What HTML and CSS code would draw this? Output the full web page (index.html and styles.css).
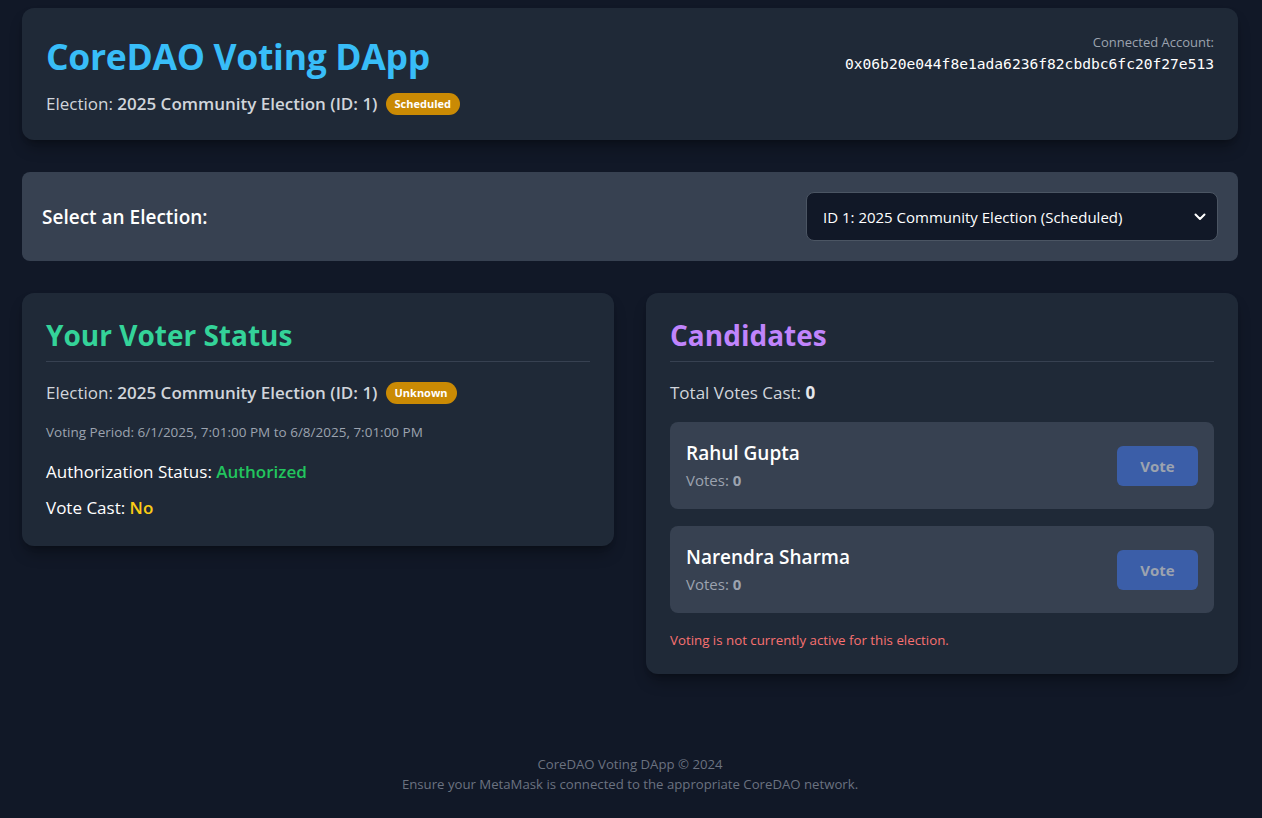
FILE: index.html
```html
<!DOCTYPE html>
<html lang="en">
<head>
<meta charset="utf-8">
<title>CoreDAO Voting DApp</title>
<link rel="stylesheet" href="styles.css">
</head>
<body>
<div class="page">
  <header class="header card">
    <div class="header-left">
      <h1 class="title">CoreDAO Voting DApp</h1>
      <p class="election-line">Election: <strong>2025 Community Election (ID: 1)</strong> <span class="badge">Scheduled</span></p>
    </div>
    <div class="account">
      <div class="account-label">Connected Account:</div>
      <div class="account-addr">0x06b20e044f8e1ada6236f82cbdbc6fc20f27e513</div>
    </div>
  </header>

  <section class="selector">
    <label class="selector-label" for="el">Select an Election:</label>
    <div class="select-wrap">
      <select id="el" class="select">
        <option>ID 1: 2025 Community Election (Scheduled)</option>
      </select>
      <svg class="chev" width="12" height="8" viewBox="0 0 12 8"><path d="M1.5 1.5 L6 6 L10.5 1.5" fill="none" stroke="#ffffff" stroke-width="2" stroke-linecap="round" stroke-linejoin="round"/></svg>
    </div>
  </section>

  <div class="columns">
    <section class="card panel">
      <h2 class="panel-title green">Your Voter Status</h2>
      <p class="election-line small-gap">Election: <strong>2025 Community Election (ID: 1)</strong> <span class="badge">Unknown</span></p>
      <p class="period">Voting Period: 6/1/2025, 7:01:00 PM to 6/8/2025, 7:01:00 PM</p>
      <p class="status">Authorization Status: <strong class="ok">Authorized</strong></p>
      <p class="status">Vote Cast: <strong class="warn">No</strong></p>
    </section>

    <section class="card panel">
      <h2 class="panel-title purple">Candidates</h2>
      <p class="total">Total Votes Cast: <strong>0</strong></p>
      <div class="cand-list">
        <div class="cand">
          <div>
            <div class="cand-name">Rahul Gupta</div>
            <div class="cand-votes">Votes: <strong>0</strong></div>
          </div>
          <button class="vote-btn" disabled>Vote</button>
        </div>
        <div class="cand">
          <div>
            <div class="cand-name">Narendra Sharma</div>
            <div class="cand-votes">Votes: <strong>0</strong></div>
          </div>
          <button class="vote-btn" disabled>Vote</button>
        </div>
      </div>
      <p class="notice">Voting is not currently active for this election.</p>
    </section>
  </div>

  <footer class="footer">
    <p>CoreDAO Voting DApp © 2024</p>
    <p>Ensure your MetaMask is connected to the appropriate CoreDAO network.</p>
  </footer>
</div>
</body>
</html>
```

FILE: styles.css
```css
* { box-sizing: border-box; }
html, body { margin: 0; padding: 0; }
body {
  background: #111827;
  color: #e5e7eb;
  font-family: "Open Sans", "Noto Sans", sans-serif;
  min-height: 818px;
}
p { margin: 0; }
h1, h2 { margin: 0; }
.page {
  padding: 8px 24px 0 22px;
}
.card {
  background: #1f2937;
  border-radius: 12px;
  box-shadow: 0 10px 15px -3px rgba(0,0,0,0.3), 0 4px 6px -4px rgba(0,0,0,0.3);
}
.header {
  display: flex;
  justify-content: space-between;
  align-items: flex-start;
  padding: 24px;
  height: 132px;
}
.title {
  font-size: 35.5px;
  line-height: 48px;
  font-weight: 700;
  color: #38bdf8;
  letter-spacing: -0.3px;
}
.election-line {
  font-size: 17px;
  line-height: 28px;
  color: #d1d5db;
  margin-top: 10px;
  display: flex;
  align-items: center;
  white-space: pre;
}
.election-line strong { font-weight: 600; color: #d1d5db; }
.badge {
  display: inline-block;
  background: #ca8a04;
  color: #fff;
  font-size: 11px;
  font-weight: 700;
  line-height: 22px;
  padding: 0 9px;
  border-radius: 999px;
  margin-left: 8px;
}
.account {
  text-align: right;
  padding-top: 0;
}
.account-label {
  font-size: 13px;
  line-height: 20px;
  color: #9ca3af;
}
.account-addr {
  font-family: "DejaVu Sans Mono", "Liberation Mono", monospace;
  font-size: 14.6px;
  line-height: 22px;
  color: #ffffff;
  font-weight: 400;
  margin-top: 1px;
}
.selector {
  margin-top: 32px;
  background: #374151;
  border-radius: 8px;
  padding: 20px;
  display: flex;
  align-items: center;
  justify-content: space-between;
  height: 89px;
}
.selector-label {
  font-size: 19px;
  font-weight: 600;
  color: #ffffff;
}
.select-wrap {
  position: relative;
  width: 412px;
}
.select {
  appearance: none;
  -webkit-appearance: none;
  width: 100%;
  height: 49px;
  background: #111827;
  color: #ffffff;
  border: 1px solid #4b5563;
  border-radius: 8px;
  padding: 0 40px 0 16px;
  font-family: inherit;
  font-size: 15px;
}
.chev {
  position: absolute;
  right: 12px;
  top: 21px;
  pointer-events: none;
}
.columns {
  margin-top: 32px;
  display: grid;
  grid-template-columns: 1fr 1fr;
  gap: 32px;
  align-items: start;
}
.panel {
  padding: 24px;
}
.panel-title {
  font-size: 28px;
  line-height: 36px;
  font-weight: 700;
  padding-bottom: 8px;
  border-bottom: 1px solid #374151;
}
.green { color: #34d399; }
.purple { color: #c084fc; }
.small-gap { margin-top: 17px; }
.period {
  font-size: 13.5px;
  line-height: 20px;
  color: #9ca3af;
  margin-top: 15px;
}
.status {
  font-size: 17px;
  line-height: 28px;
  color: #ffffff;
  margin-top: 16px;
}
.status + .status { margin-top: 8px; }
.status strong { font-weight: 600; }
.ok { color: #22c55e; }
.warn { color: #facc15; }
.total {
  font-size: 17px;
  line-height: 28px;
  color: #d1d5db;
  margin-top: 17px;
}
.total strong { font-weight: 700; color: #e5e7eb; }
.cand-list {
  margin-top: 15px;
  display: flex;
  flex-direction: column;
  gap: 17px;
}
.cand {
  background: #374151;
  border-radius: 8px;
  padding: 16px;
  height: 87px;
  display: flex;
  align-items: center;
  justify-content: space-between;
}
.cand-name {
  font-size: 19px;
  line-height: 28px;
  font-weight: 600;
  color: #ffffff;
}
.cand-votes {
  font-size: 15px;
  line-height: 24px;
  color: #9ca3af;
  margin-top: 1px;
}
.cand-votes strong { font-weight: 700; }
.vote-btn {
  width: 81px;
  height: 40px;
  border: none;
  border-radius: 6px;
  background: #3b5ea8;
  color: #9ca3af;
  font-family: inherit;
  font-size: 15px;
  font-weight: 700;
}
.notice {
  margin-top: 17px;
  font-size: 13.3px;
  line-height: 20px;
  color: #f87171;
}
.footer {
  margin-top: 80px;
  text-align: center;
  font-size: 13.2px;
  line-height: 20px;
  color: #6b7280;
}
```
